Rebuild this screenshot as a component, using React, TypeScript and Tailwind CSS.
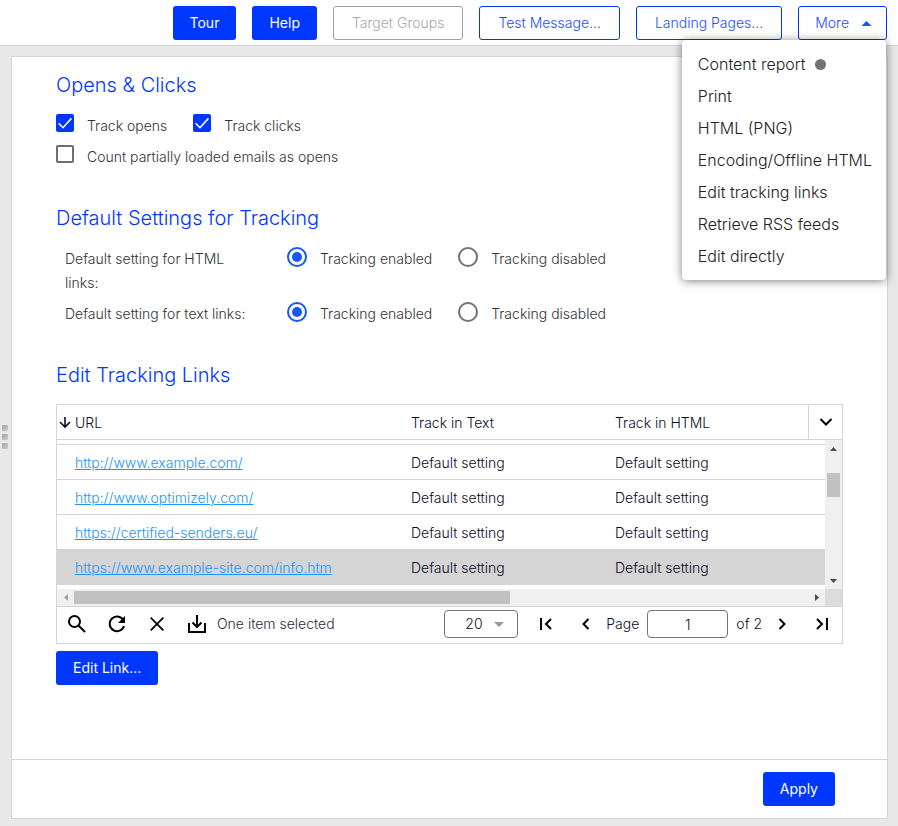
import { useState } from 'react'
import type { ReactNode } from 'react'

const menuItems = [
  'Content report',
  'Print',
  'HTML (PNG)',
  'Encoding/Offline HTML',
  'Edit tracking links',
  'Retrieve RSS feeds',
  'Edit directly',
]

const links = [
  'http://www.example.com/',
  'http://www.optimizely.com/',
  'https://certified-senders.eu/',
  'https://www.example-site.com/info.htm',
]

const solidButton = 'h-[34px] rounded-[3px] bg-[#0037ff] px-[17px] text-sm font-normal text-white'
const outlineButton =
  'h-[34px] rounded-[3px] border border-[#0037ff] bg-white text-sm text-[#0037ff]/90 disabled:border-[#a0a0a0] disabled:text-[#a8a8a8]'

function Icon({ size = 24, width = 2, children }: { size?: number; width?: number; children: ReactNode }) {
  return (
    <svg width={size} height={size} viewBox={`0 0 ${size} ${size}`} fill="none" stroke="currentColor" strokeWidth={width} aria-hidden="true">
      {children}
    </svg>
  )
}

function IconButton({ label, children }: { label: string; children: ReactNode }) {
  return (
    <button type="button" aria-label={label} className="flex h-8 w-10 shrink-0 items-center justify-center text-black">
      {children}
    </button>
  )
}

function Checkbox({ label, defaultChecked = false }: { label: string; defaultChecked?: boolean }) {
  return (
    <label className="flex items-start gap-[13px]">
      <span className="grid size-[18px] shrink-0 place-items-center">
        <input
          type="checkbox"
          defaultChecked={defaultChecked}
          className="peer col-start-1 row-start-1 size-[18px] appearance-none rounded-[2px] border-2 border-[#6e6e6e] bg-white checked:border-[#0037ff] checked:bg-[#0037ff]"
        />
        <svg viewBox="0 0 18 18" className="pointer-events-none invisible col-start-1 row-start-1 size-[18px] peer-checked:visible" fill="none" stroke="white" strokeWidth="1.6" aria-hidden="true">
          <path d="M2.6 9.2 7 13.7 15.4 4.4" />
        </svg>
      </span>
      <span>{label}</span>
    </label>
  )
}

function Radio({ name, label, defaultChecked = false }: { name: string; label: string; defaultChecked?: boolean }) {
  return (
    <label className="flex items-start gap-[13px]">
      <span className="grid size-5 shrink-0 place-items-center">
        <input
          type="radio"
          name={name}
          defaultChecked={defaultChecked}
          className="peer col-start-1 row-start-1 size-5 appearance-none rounded-full border-2 border-[#737373] bg-white checked:border-[#1558f5]"
        />
        <span className="pointer-events-none invisible col-start-1 row-start-1 size-[10px] rounded-full bg-[#1558f5] peer-checked:visible" />
      </span>
      <span>{label}</span>
    </label>
  )
}

function TrackingDefault({ label, name }: { label: string; name: string }) {
  return (
    <div role="radiogroup" aria-label={label} className="flex items-start pl-[9px]">
      <span className="mr-8 w-[190px] shrink-0">{label}</span>
      <div className="flex gap-[26px]">
        <Radio name={name} label="Tracking enabled" defaultChecked />
        <Radio name={name} label="Tracking disabled" />
      </div>
    </div>
  )
}

function SectionTitle({ children }: { children: ReactNode }) {
  return <h2 className="mb-[15px] text-xl leading-7 font-light text-[#0037ff]">{children}</h2>
}

function MoreMenu() {
  const [open, setOpen] = useState(true)

  return (
    <div className="relative">
      <button type="button" aria-expanded={open} onClick={() => setOpen(!open)} className={`${outlineButton} flex items-center gap-3 pr-[14px] pl-4`}>
        More
        <svg width="11" height="5" viewBox="0 0 11 5" fill="#1558f5" aria-hidden="true">
          <path d="M.5 5l5-5 5 5z" />
        </svg>
      </button>
      {open && (
        <ul role="menu" className="absolute top-full right-px z-10 rounded bg-white py-2 whitespace-nowrap shadow-[0_1px_10px_rgba(0,0,0,0.5)]">
          {menuItems.map((item, i) => (
            <li key={item} role="none">
              <button type="button" role="menuitem" className="flex h-8 w-full items-center gap-[9px] pr-[14px] pl-4 text-base font-light text-[#212121]">
                {item}
                {i === 0 && <span className="size-[11px] rounded-full bg-[#737373]" />}
              </button>
            </li>
          ))}
        </ul>
      )}
    </div>
  )
}

function VerticalScrollbar() {
  return (
    <div className="flex h-[149px] flex-col items-center bg-[#f0f0f0] pt-[7px] pb-[6px]">
      <svg width="7" height="4" viewBox="0 0 7 4" fill="#4a4a4a"><path d="M0 4 3.5 0 7 4z" /></svg>
      <div className="mt-[22px] h-6 w-[13px] bg-[#c1c1c1]" />
      <svg className="mt-auto" width="7" height="4" viewBox="0 0 7 4" fill="#4a4a4a"><path d="M0 0 3.5 4 7 0z" /></svg>
    </div>
  )
}

function HorizontalScrollbar() {
  return (
    <div aria-hidden="true" className="flex h-[17px] items-center bg-[#f0f0f0]">
      <span className="flex w-[17px] justify-center">
        <svg width="4" height="7" viewBox="0 0 4 7" fill="#a3a3a3"><path d="M4 0 0 3.5 4 7z" /></svg>
      </span>
      <div className="grid flex-1 grid-cols-[436fr_298fr]">
        <div className="h-[13px] bg-[#c1c1c1]" />
      </div>
      <span className="flex w-[17px] justify-center">
        <svg width="4" height="7" viewBox="0 0 4 7" fill="#4a4a4a"><path d="M0 0 4 3.5 0 7z" /></svg>
      </span>
      <span className="size-[17px] bg-[#dcdcdc]" />
    </div>
  )
}

function LinkTable() {
  const [selected, setSelected] = useState(3)
  const [page, setPage] = useState('1')

  return (
    <div className="border border-[#d5d5d5] text-[#0c0c24]">
      <table className="w-full table-fixed border-separate border-spacing-0 text-left">
        <colgroup>
          <col className="w-[336px]" />
          <col className="w-[204px]" />
          <col />
          <col className="w-[17px]" />
          <col className="w-[17px]" />
        </colgroup>
        <thead>
          <tr className="h-[35px]">
            <th className="border-b border-[#d5d5d5] p-0 pt-[2px] font-light">
              <span className="flex items-center gap-1 pl-[2px]">
                <Icon size={12} width={1.6}>
                  <path d="M6 0v10M1 5l5 5 5-5" />
                </Icon>
                URL
              </span>
            </th>
            <th className="border-b border-[#d5d5d5] p-0 pt-[2px] pl-[18px] font-light">Track in Text</th>
            <th className="border-b border-[#d5d5d5] p-0 pt-[2px] pl-[18px] font-light">Track in HTML</th>
            <th colSpan={2} className="border-b border-l border-[#d5d5d5] p-0">
              <button type="button" aria-label="Columns" className="flex w-full justify-center text-black">
                <Icon size={14} width={2}>
                  <path d="M1.5 4 7 9.5 12.5 4" />
                </Icon>
              </button>
            </th>
          </tr>
        </thead>
        <tbody>
          <tr className="h-[5px]">
            <td colSpan={4} className="border-b border-[#d5d5d5] p-0" />
            <td rowSpan={6} aria-hidden="true" className="p-0 align-top">
              <VerticalScrollbar />
            </td>
          </tr>
          {links.map((url, i) => {
            const cell = i === links.length - 1 ? 'p-0 pt-px pl-[18px]' : 'border-b border-[#d5d5d5] p-0 pt-[2px] pl-[18px]'
            return (
              <tr key={url} onClick={() => setSelected(i)} className={i === selected ? 'h-[35px] bg-[#d5d5d5]' : 'h-[35px]'}>
                <td className={cell}>
                  <a href={url} onClick={(e) => e.preventDefault()} className="text-[#1e96f5] underline">
                    {url}
                  </a>
                </td>
                <td className={cell}>Default setting</td>
                <td colSpan={2} className={cell}>Default setting</td>
              </tr>
            )
          })}
          <tr className="h-1">
            <td colSpan={4} className="p-0" />
          </tr>
        </tbody>
      </table>
      <HorizontalScrollbar />
      <div className="flex h-[37px] items-center border-t border-[#d5d5d5] pb-[2px]">
        <IconButton label="Search">
          <Icon size={20}>
            <circle cx="7.5" cy="7.5" r="5.5" />
            <path d="m11.5 11.5 6.5 6.5" />
          </Icon>
        </IconButton>
        <IconButton label="Refresh">
          <Icon size={18}>
            <path d="M15.2 5A7.3 7.3 0 1 0 16 11" />
            <path d="M17 1v7h-7z" fill="currentColor" stroke="none" />
          </Icon>
        </IconButton>
        <IconButton label="Clear selection">
          <Icon size={14} width={1.8}>
            <path d="m.7.7 12.6 12.6M13.3.7.7 13.3" />
          </Icon>
        </IconButton>
        <IconButton label="Export">
          <Icon size={20}>
            <path d="M2 9v9h16V9M10 1v12M5.5 8.5 10 13l4.5-4.5" />
          </Icon>
        </IconButton>
        <span className="text-[#2a2a3c]">One item selected</span>
        <div className="mr-2 ml-auto grid items-center">
          <select aria-label="Rows per page" className="col-start-1 row-start-1 h-7 w-[74px] appearance-none rounded border border-[#737373] bg-white pl-5">
            <option>20</option>
            <option>50</option>
          </select>
          <svg width="10" height="5" viewBox="0 0 10 5" fill="#999" className="pointer-events-none col-start-1 row-start-1 mr-[14px] justify-self-end" aria-hidden="true">
            <path d="M0 0h10L5 5z" />
          </svg>
        </div>
        <IconButton label="First page">
          <Icon size={14}>
            <path d="M2 1v12M12 2 7 7l5 5" />
          </Icon>
        </IconButton>
        <IconButton label="Previous page">
          <Icon size={14}>
            <path d="M9.5 2l-5 5 5 5" />
          </Icon>
        </IconButton>
        <label className="flex items-center gap-2">
          Page
          <input value={page} onChange={(e) => setPage(e.target.value)} className="h-7 w-[81px] rounded border border-[#737373] text-center" />
        </label>
        <span className="ml-2">of 2</span>
        <IconButton label="Next page">
          <Icon size={14}>
            <path d="m4.5 2 5 5-5 5" />
          </Icon>
        </IconButton>
        <IconButton label="Last page">
          <Icon size={14}>
            <path d="M12 1v12M2 2l5 5-5 5" />
          </Icon>
        </IconButton>
      </div>
    </div>
  )
}

export default function App() {
  return (
    <div className="flex min-h-screen flex-col bg-[#e8e8e8] font-['Inter',sans-serif] text-sm leading-6 font-light text-[#333]">
      <header className="flex justify-end gap-4 border-b border-[#d5d5d5] bg-white pt-[6px] pr-[11px] pb-[5px]">
        <button type="button" className={solidButton}>Tour</button>
        <button type="button" className={solidButton}>Help</button>
        <button type="button" disabled className={`${outlineButton} px-[18px]`}>Target Groups</button>
        <button type="button" className={`${outlineButton} px-[18px]`}>Test Message...</button>
        <button type="button" className={`${outlineButton} px-[18px]`}>Landing Pages...</button>
        <MoreMenu />
      </header>

      <div className="flex flex-1">
        <div aria-hidden="true" className="flex w-[11px] shrink-0 flex-col justify-center gap-[3px] pt-[2px] pl-[2px]">
          <span className="size-[6px] rounded-[1px] bg-linear-to-br from-[#a3a3a3] to-[#cfcfcf]" />
          <span className="size-[6px] rounded-[1px] bg-linear-to-br from-[#a3a3a3] to-[#cfcfcf]" />
          <span className="size-[6px] rounded-[1px] bg-linear-to-br from-[#a3a3a3] to-[#cfcfcf]" />
        </div>

        <main className="mt-[10px] mr-[10px] mb-[7px] flex flex-1 flex-col border border-[#d5d5d5] bg-white">
          <div className="flex-1 px-11 pt-[14px]">
            <section className="mb-[35px]">
              <SectionTitle>Opens &amp; Clicks</SectionTitle>
              <div className="flex flex-col gap-[7px]">
                <div className="flex gap-[26px]">
                  <Checkbox label="Track opens" defaultChecked />
                  <Checkbox label="Track clicks" defaultChecked />
                </div>
                <Checkbox label="Count partially loaded emails as opens" />
              </div>
            </section>

            <section className="mb-[35px]">
              <SectionTitle>Default Settings for Tracking</SectionTitle>
              <div className="flex flex-col gap-[7px]">
                <TrackingDefault label="Default setting for HTML links:" name="html-links" />
                <TrackingDefault label="Default setting for text links:" name="text-links" />
              </div>
            </section>

            <section>
              <SectionTitle>Edit Tracking Links</SectionTitle>
              <LinkTable />
              <button type="button" className={`${solidButton} mt-[7px]`}>Edit Link...</button>
            </section>
          </div>

          <footer className="flex justify-end border-t border-[#d5d5d5] py-3 pr-[52px]">
            <button type="button" className={solidButton}>Apply</button>
          </footer>
        </main>
      </div>
    </div>
  )
}
